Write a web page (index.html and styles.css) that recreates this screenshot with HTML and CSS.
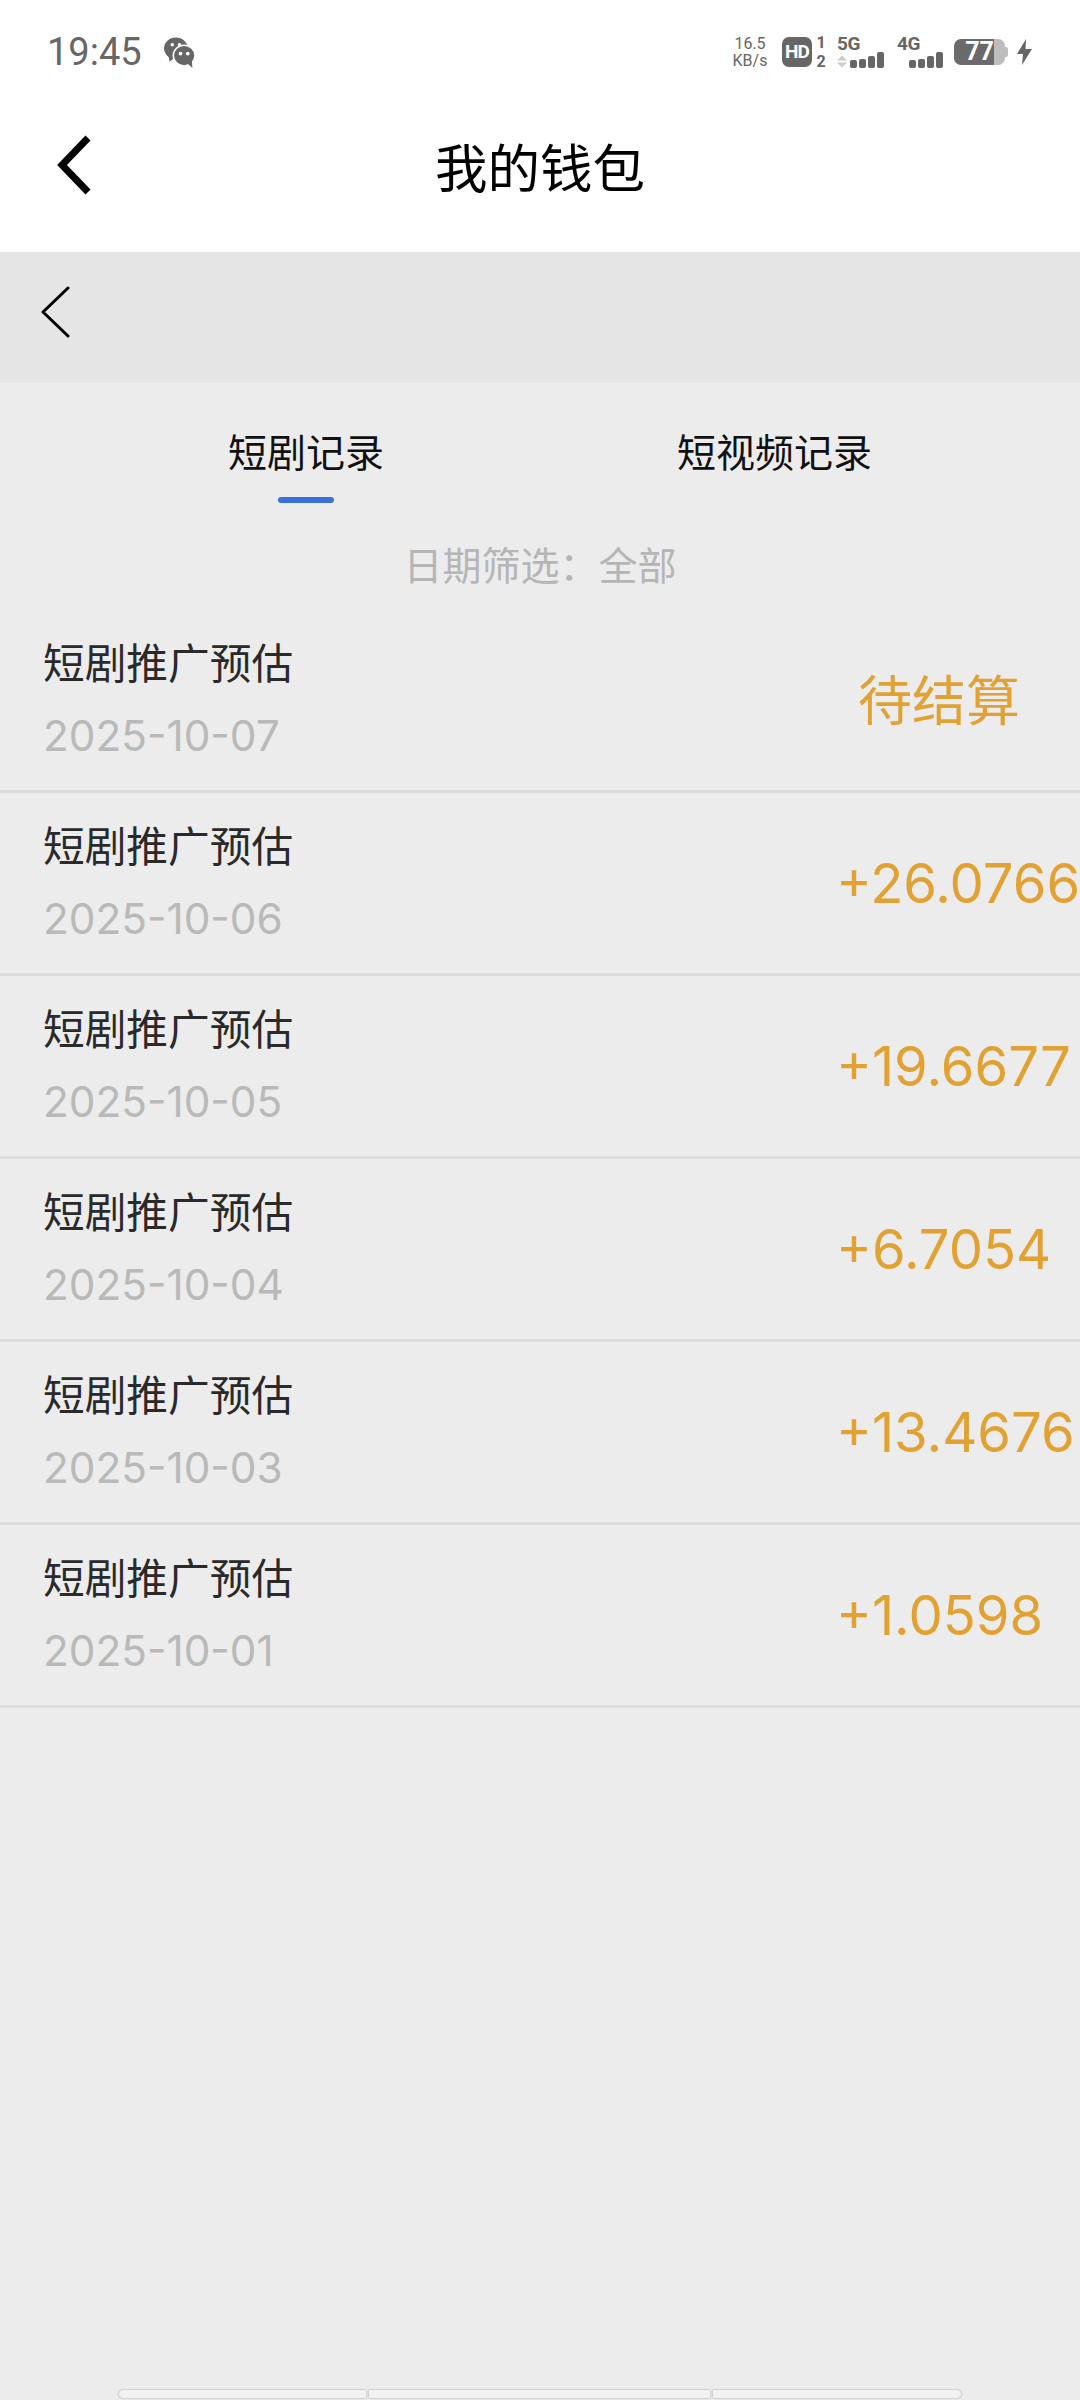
FILE: index.html
```html
<!DOCTYPE html>
<html lang="zh-CN">
  <head>
    <meta charset="UTF-8" />
    <meta name="viewport" content="width=device-width, initial-scale=1.0" />
    <title>我的钱包</title>
    <link rel="stylesheet" href="styles.css">
  </head>
  <body>
    <header class="app-header">
      <div class="status-bar">
        <div class="status-left">
          <span class="clock">19:45</span>
          <svg class="wechat" viewBox="0 0 30 30">
            <ellipse cx="11.5" cy="11" rx="11.5" ry="10.5" fill="#666" />
            <path d="M4 17 L5.5 24 L11 19 Z" fill="#666" />
            <ellipse cx="19.5" cy="18" rx="10.5" ry="10" fill="#666" stroke="#fff" stroke-width="1.5" />
            <path d="M23 26 L27.5 30 L27 23 Z" fill="#666" />
            <circle cx="8" cy="7.5" r="1.7" fill="#fff" />
            <circle cx="15" cy="7.5" r="1.7" fill="#fff" />
            <circle cx="16" cy="16" r="1.8" fill="#fff" />
            <circle cx="23" cy="16" r="1.8" fill="#fff" />
          </svg>
        </div>
        <div class="status-right">
          <div class="net-speed"><span>16.5</span><span>KB/s</span></div>
          <span class="hd-badge">HD</span>
          <div class="sim-nums"><span>1</span><span>2</span></div>
          <div class="signal signal-5g">
            <span class="gen">5G</span>
            <div class="signal-row">
              <svg class="updown" viewBox="0 0 10 12"><path d="M5 0 L10 5 H0 Z M0 7 H10 L5 12 Z" fill="#ccc" /></svg>
              <div class="bars"><i class="b1"></i><i class="b2"></i><i class="b3"></i><i class="b4"></i></div>
            </div>
          </div>
          <div class="signal signal-4g">
            <span class="gen">4G</span>
            <div class="bars"><i class="b1"></i><i class="b2"></i><i class="b3"></i><i class="b4"></i></div>
          </div>
          <div class="battery"><div class="battery-body"><span>77</span></div><div class="battery-nub"></div></div>
          <svg class="bolt" viewBox="0 0 15 26"><path d="M9 0 L0 15 H6 L5 26 L15 10 H8.5 Z" fill="#666" /></svg>
        </div>
      </div>
      <div class="title-bar">
        <svg class="back-thick" viewBox="0 0 36 60"><path d="M32 3 L6 30 L32 57" fill="none" stroke="#000" stroke-width="7" /></svg>
        <h1>我的钱包</h1>
      </div>
    </header>

    <div class="sub-bar">
      <svg class="back-thin" viewBox="0 0 30 52"><path d="M28 2 L3 26 L28 50" fill="none" stroke="#000" stroke-width="3" stroke-linecap="round" stroke-linejoin="round" /></svg>
    </div>

    <nav class="tabs">
      <div class="tab active">短剧记录</div>
      <div class="tab">短视频记录</div>
    </nav>

    <div class="date-filter">日期筛选<span class="colon">：</span>全部</div>

    <ul class="records">
      <li class="record">
        <div class="record-info"><div class="record-name">短剧推广预估</div><div class="record-date">2025-10-07</div></div>
        <div class="record-amount pending">待结算</div>
      </li>
      <li class="record">
        <div class="record-info"><div class="record-name">短剧推广预估</div><div class="record-date">2025-10-06</div></div>
        <div class="record-amount">+26.0766</div>
      </li>
      <li class="record">
        <div class="record-info"><div class="record-name">短剧推广预估</div><div class="record-date">2025-10-05</div></div>
        <div class="record-amount">+19.6677</div>
      </li>
      <li class="record">
        <div class="record-info"><div class="record-name">短剧推广预估</div><div class="record-date">2025-10-04</div></div>
        <div class="record-amount">+6.7054</div>
      </li>
      <li class="record">
        <div class="record-info"><div class="record-name">短剧推广预估</div><div class="record-date">2025-10-03</div></div>
        <div class="record-amount">+13.4676</div>
      </li>
      <li class="record">
        <div class="record-info"><div class="record-name">短剧推广预估</div><div class="record-date">2025-10-01</div></div>
        <div class="record-amount">+1.0598</div>
      </li>
    </ul>

    <div class="bottom-strip">
      <span class="strip-left"></span>
      <span class="strip-mid"></span>
      <span class="strip-right"></span>
    </div>
  </body>
</html>
```

FILE: styles.css
```css
* {
  box-sizing: border-box;
}

html,
body {
  height: 2400px;
}

body {
  margin: 0;
  width: 1080px;
  overflow: hidden;
  display: flex;
  flex-direction: column;
  background: #ececec;
  color: #222;
  font-family: Inter, "Noto Sans CJK SC", sans-serif;
}

.app-header {
  height: 252px;
  background: #fff;
}

.status-bar {
  height: 104px;
  padding: 0 48px 0 47px;
  display: flex;
  justify-content: space-between;
  align-items: center;
}

.status-left {
  display: flex;
  align-items: center;
  gap: 22px;
}

.clock {
  font-family: Roboto, sans-serif;
  font-size: 38px;
  color: #666;
}

.wechat {
  width: 31px;
  height: 31px;
}

.status-right {
  display: flex;
  align-items: center;
  color: #666;
  font-family: Roboto, sans-serif;
}

.net-speed {
  width: 38px;
  display: flex;
  flex-direction: column;
  align-items: center;
  font-size: 16px;
  line-height: 17px;
}

.hd-badge {
  margin-left: 13px;
  width: 30px;
  height: 30px;
  border-radius: 7px;
  background: #666;
  color: #fff;
  font-size: 19px;
  font-weight: 700;
  line-height: 30px;
  text-align: center;
  letter-spacing: -1px;
}

.sim-nums {
  margin-left: 4px;
  width: 10px;
  display: flex;
  flex-direction: column;
  align-items: center;
  font-size: 16px;
  font-weight: 700;
  line-height: 19px;
}

.signal {
  display: flex;
  flex-direction: column;
  height: 32px;
}

.signal-5g {
  margin-left: 11px;
  width: 47px;
}

.signal-4g {
  margin-left: 13px;
  width: 47px;
}

.gen {
  font-size: 19px;
  font-weight: 700;
  line-height: 15px;
  letter-spacing: -0.5px;
}

.signal-row {
  display: flex;
  justify-content: space-between;
  align-items: flex-end;
  margin-top: auto;
}

.updown {
  width: 10px;
  height: 13px;
}

.bars {
  display: flex;
  align-items: flex-end;
  gap: 2px;
  height: 16px;
}

.signal-4g .bars {
  margin-top: auto;
  margin-left: 12px;
}

.bars i {
  display: block;
  width: 7px;
  border-radius: 2px;
  background: #666;
}

.b1 { height: 8px; }
.b2 { height: 9px; }
.b3 { height: 12px; }
.b4 { height: 16px; }

.battery {
  margin-left: 10px;
  display: flex;
  align-items: center;
}

.battery-body {
  width: 51px;
  height: 26px;
  border-radius: 7px;
  background: linear-gradient(to right, #6a6a6a 40px, #bdbdbd 40px);
  color: #fff;
  font-size: 25px;
  font-weight: 700;
  line-height: 26px;
  text-align: center;
}

.battery-nub {
  width: 3px;
  height: 10px;
  border-radius: 0 2px 2px 0;
  background: #bdbdbd;
}

.bolt {
  margin-left: 9px;
  width: 15px;
  height: 26px;
}

.title-bar {
  position: relative;
  height: 128px;
  padding-top: 2px;
  display: flex;
  justify-content: center;
  align-items: center;
}

.back-thick {
  position: absolute;
  left: 56px;
  top: 31px;
  width: 36px;
  height: 60px;
}

h1 {
  margin: 0;
  font-size: 52.5px;
  font-weight: 400;
  color: #000;
  line-height: 72px;
}

.sub-bar {
  height: 131px;
  padding-left: 40px;
  display: flex;
  align-items: center;
  background: #e5e5e5;
}

.back-thin {
  width: 30px;
  height: 52px;
  margin-top: -11px;
}

.tabs {
  display: flex;
  gap: 293px;
  padding-left: 228px;
  margin-top: 44px;
}

.tab {
  position: relative;
  height: 76px;
  font-size: 39px;
  line-height: 52px;
  color: #111;
}

.tab.active::after {
  content: "";
  position: absolute;
  left: 50%;
  bottom: 0;
  width: 56px;
  height: 6px;
  margin-left: -28px;
  border-radius: 3px;
  background: #3a6fdc;
}

.date-filter {
  margin-top: 34px;
  text-align: center;
  font-size: 39px;
  line-height: 52px;
  color: #b5b5b5;
}

.colon {
  font-family: "Noto Sans CJK TC", sans-serif;
}

.records {
  list-style: none;
  margin: 0;
  padding: 0;
  margin-top: 18px;
}

.record {
  height: 183px;
  padding-left: 43px;
  display: flex;
  align-items: center;
  justify-content: space-between;
  border-bottom: 3px solid #dcdcdc;
}

.record-name {
  font-size: 41.7px;
  line-height: 58px;
  color: #2a2a2a;
}

.record-date {
  margin-top: 14px;
  font-size: 42.3px;
  line-height: 58px;
  color: #b9b9b9;
}

.record-amount {
  width: 244px;
  flex: none;
  white-space: nowrap;
  font-size: 54.4px;
  color: #e2a233;
}

.record-amount.pending {
  padding-left: 22px;
  margin-bottom: 6px;
  font-size: 54px;
}

.bottom-strip {
  margin-top: auto;
  margin-bottom: 2px;
  padding-left: 119px;
  display: flex;
  gap: 3px;
}

.bottom-strip span {
  display: block;
  height: 8px;
  background: #f2f2f2;
  box-shadow: 0 0 2px #888;
}

.strip-left {
  width: 247px;
  border-radius: 4px 0 0 4px;
}

.strip-mid {
  width: 341px;
}

.strip-right {
  width: 248px;
  border-radius: 0 4px 4px 0;
}
```
